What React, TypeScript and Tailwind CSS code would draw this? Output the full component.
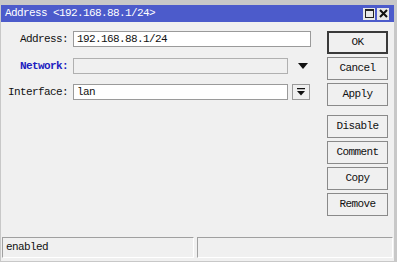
import React from "react";

const mono = { fontFamily: '"Liberation Mono", "DejaVu Sans Mono", monospace' };

function Btn({ label, primary }: { label: string; primary?: boolean }) {
  return (
    <div
      className={
        "h-[23px] w-[61px] flex items-center justify-center bg-[#f0f0f0] text-[11px] tracking-[-0.6px] text-[#111] " +
        (primary ? "border-2 border-[#3a3a3a]" : "border border-[#8a8a8a]")
      }
    >
      {label}
    </div>
  );
}

export default function App() {
  return (
    <div
      className="w-[397px] h-[262px] bg-[#c8c8c8] pt-[5px] pr-[3px] pl-[1px] pb-[1px] flex flex-col overflow-hidden"
      style={mono}
    >
      <div className="h-[17px] bg-[#4c5bcb] flex items-center justify-between pl-[4px] pr-[5px] shrink-0">
        <span className="text-white text-[11px] tracking-[-0.6px] leading-none">
          Address &lt;192.168.88.1/24&gt;
        </span>
        <div className="flex gap-[2px]">
          <div className="w-[12px] h-[12px] bg-[#e8e8e8] flex items-center justify-center">
            <div className="w-[9px] h-[9px] border border-[#222] border-t-2" />
          </div>
          <div className="w-[12px] h-[12px] bg-[#e8e8e8] flex items-center justify-center">
            <svg width="9" height="9" viewBox="0 0 9 9">
              <path d="M1 1 L8 8 M8 1 L1 8" stroke="#111" strokeWidth="2" />
            </svg>
          </div>
        </div>
      </div>
      <div className="flex-1 bg-[#f0f0f0] flex flex-col">
        <div className="flex flex-1 pt-[9px]">
          <div className="w-[326px] flex flex-col gap-[10px] text-[11px] tracking-[-0.6px]">
            <div className="flex items-center gap-[5px]">
              <div className="w-[67px] text-right text-[#111]">Address:</div>
              <div className="w-[238px] h-[16px] bg-white border border-[#9a9a9a] flex items-center pl-[3px] text-[#111]">
                192.168.88.1/24
              </div>
            </div>
            <div className="flex items-center gap-[5px]">
              <div className="w-[67px] text-right text-[#2020c0] font-bold">Network:</div>
              <div className="w-[215px] h-[16px] bg-[#f0f0f0] border border-[#b0b0b0]" />
              <svg width="10" height="6" viewBox="0 0 10 6" className="ml-[5px]">
                <path d="M0 0 L10 0 L5 6 Z" fill="#111" />
              </svg>
            </div>
            <div className="flex items-center gap-[5px]">
              <div className="w-[67px] text-right text-[#111]">Interface:</div>
              <div className="w-[215px] h-[16px] bg-white border border-[#9a9a9a] flex items-center pl-[3px] text-[#111]">
                lan
              </div>
              <div className="w-[18px] h-[16px] ml-[-1px] bg-[#f0f0f0] border border-[#9a9a9a] flex items-center justify-center">
                <svg width="8" height="8" viewBox="0 0 8 8">
                  <path d="M0 0.5 H8" stroke="#111" strokeWidth="1.5" />
                  <path d="M0 3 L8 3 L4 7.5 Z" fill="#111" />
                </svg>
              </div>
            </div>
          </div>
          <div className="flex flex-col gap-[3px]">
            <Btn label="OK" primary />
            <Btn label="Cancel" />
            <Btn label="Apply" />
            <div className="h-[3px]" />
            <Btn label="Disable" />
            <Btn label="Comment" />
            <Btn label="Copy" />
            <Btn label="Remove" />
          </div>
        </div>
        <div className="flex gap-[3px] px-[1px] pb-[3px] h-[24px]">
          <div className="w-[192px] h-[21px] border-t border-l border-[#a0a0a0] border-b border-r border-b-white border-r-white flex items-center pl-[3px] text-[11px] tracking-[-0.6px] text-[#111]">
            enabled
          </div>
          <div className="flex-1 h-[21px] border-t border-l border-[#a0a0a0] border-b border-r border-b-white border-r-white" />
        </div>
      </div>
    </div>
  );
}
